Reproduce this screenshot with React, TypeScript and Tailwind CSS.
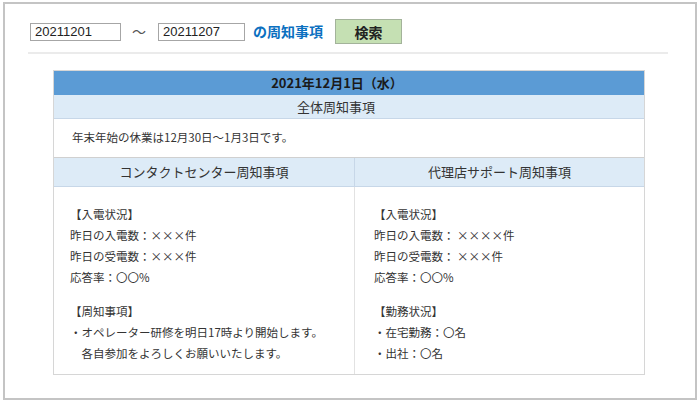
import React from 'react';

const jp = { fontFamily: '"Noto Sans CJK JP", "Noto Sans", sans-serif' };

// Left and right columns of the notice table
const contactLines = [
  { head: '【入電状況】', lines: ['昨日の入電数：×××件', '昨日の受電数：×××件', '応答率：〇〇%'] },
  { head: '【周知事項】', lines: ['・オペレーター研修を明日17時より開始します。', '　各自参加をよろしくお願いいたします。'] },
];

const agencyLines = [
  { head: '【入電状況】', lines: ['昨日の入電数： ××××件', '昨日の受電数： ×××件', '応答率：〇〇%'] },
  { head: '【勤務状況】', lines: ['・在宅勤務：〇名', '・出社：〇名'] },
];

function NoticeBlock({ groups }: { groups: { head: string; lines: string[] }[] }) {
  return (
    <div className="pt-[17px] pb-[10px] text-[11.5px] leading-[21px] text-[#333]">
      {groups.map((g, i) => (
        <div key={g.head} className={i > 0 ? 'mt-[13px]' : ''}>
          <div>{g.head}</div>
          {g.lines.map((l) => (
            <div key={l} className="whitespace-pre">{l}</div>
          ))}
        </div>
      ))}
    </div>
  );
}

export default function App() {
  return (
    <div className="pt-[2px] pl-[3px] bg-white" style={jp}>
      <div className="w-[694px] h-[398px] border-2 border-[#c4c4c4] bg-white">
        {/* Search bar */}
        <div className="flex items-center h-[25px] mt-[15px] pl-[25px]">
          <div className="w-[91px] h-[18px] border border-[#a6a6a6] px-[4px] text-[13px] leading-[16px] text-[#222]" style={{ fontFamily: '"Liberation Sans", Arial, sans-serif' }}>
            20211201
          </div>
          <span className="ml-[11px] mr-[12px] text-[14px] text-[#555]">～</span>
          <div className="w-[87px] h-[18px] mt-[1px] border border-[#a6a6a6] px-[4px] text-[13px] leading-[16px] text-[#222]" style={{ fontFamily: '"Liberation Sans", Arial, sans-serif' }}>
            20211207
          </div>
          <span className="ml-[8px] text-[14px] font-bold text-[#0b70c0]">の周知事項</span>
          <button className="ml-[12px] w-[67px] h-[25px] bg-[#c5e0b3] border border-[#a3b39a] text-[14px] font-bold text-[#222] leading-none">
            検索
          </button>
        </div>
        <div className="ml-[23px] mt-[8px] w-[640px] h-[2px] bg-[#ebebeb]" />

        {/* Notice table */}
        <div className="ml-[48px] mt-[16px] w-[592px] border border-[#d6d6d6]">
          <div className="h-[24px] bg-[#5b9bd5] flex items-center justify-center pr-[24px] text-[13px] font-bold text-[#1a1a1a]">
            2021年12月1日（水）
          </div>
          <div className="h-[24px] bg-[#ddebf7] border-b border-[#c7d7e8] flex items-center justify-center pr-[26px] text-[13px] text-[#333]">
            全体周知事項
          </div>
          <div className="h-[39px] flex items-center pl-[18px] text-[11.5px] text-[#333] border-b border-[#d0d0d0]">
            年末年始の休業は12月30日～1月3日です。
          </div>
          <div className="grid grid-cols-[301px_1fr]">
            <div className="h-[29px] bg-[#ddebf7] border-r border-[#c7d7e8] border-b flex items-center justify-center text-[13px] text-[#333]">
              コンタクトセンター周知事項
            </div>
            <div className="h-[29px] bg-[#ddebf7] border-b border-[#c7d7e8] flex items-center justify-center text-[13px] text-[#333]">
              代理店サポート周知事項
            </div>
            <div className="border-r border-[#e2e2e2] pl-[16px]">
              <NoticeBlock groups={contactLines} />
            </div>
            <div className="pl-[19px]">
              <NoticeBlock groups={agencyLines} />
            </div>
          </div>
        </div>
      </div>
    </div>
  );
}
